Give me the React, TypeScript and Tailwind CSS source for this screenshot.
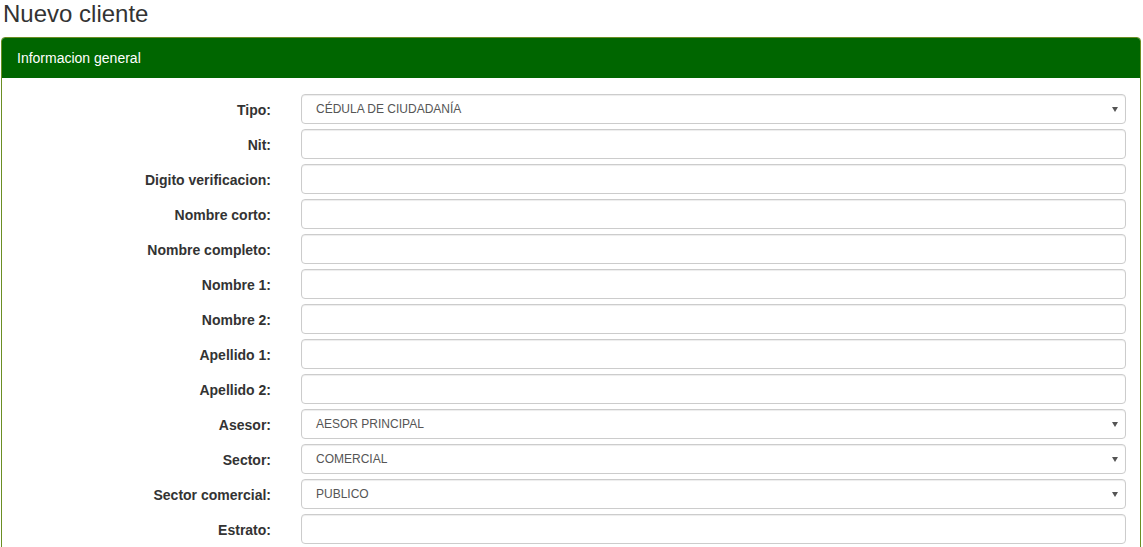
import React from 'react';

type Field = {
  label: string;
  value?: string;
  select?: boolean;
};

const fields: Field[] = [
  { label: 'Tipo:', value: 'CÉDULA DE CIUDADANÍA', select: true },
  { label: 'Nit:' },
  { label: 'Digito verificacion:' },
  { label: 'Nombre corto:' },
  { label: 'Nombre completo:' },
  { label: 'Nombre 1:' },
  { label: 'Nombre 2:' },
  { label: 'Apellido 1:' },
  { label: 'Apellido 2:' },
  { label: 'Asesor:', value: 'AESOR PRINCIPAL', select: true },
  { label: 'Sector:', value: 'COMERCIAL', select: true },
  { label: 'Sector comercial:', value: 'PUBLICO', select: true },
  { label: 'Estrato:' },
];

function FormRow({ field }: { field: Field }) {
  return (
    <div className="flex items-center">
      <label className="w-[299px] shrink-0 pr-[30px] pt-[2px] text-right text-[14px] font-bold text-[#333]">
        {field.label}
      </label>
      <div className="relative flex h-[30px] flex-1 items-center rounded-[4px] border border-[#ccc] bg-white px-[14px] shadow-[inset_0_1px_1px_rgba(0,0,0,0.075)]">
        {field.value && <span className="text-[12px] text-[#555]">{field.value}</span>}
        {field.select && (
          <svg className="absolute right-[7px] top-[12px]" width="6" height="5" viewBox="0 0 6 5">
            <path d="M0 0 H6 L3 5 Z" fill="#555" />
          </svg>
        )}
      </div>
    </div>
  );
}

export default function App() {
  return (
    <div className="min-h-screen bg-white font-['Liberation_Sans',Arial,sans-serif] text-[#333]">
      <h3 className="pl-[3px] text-[24px] leading-[28px]">Nuevo cliente</h3>

      <div className="ml-px mr-[2px] mt-[9px] rounded-t-[4px] border border-[#6b8e23]">
        {/* Header */}
        <div className="flex h-[40px] items-center rounded-t-[3px] bg-[#006600] px-[15px] text-[14px] text-white">
          Informacion general
        </div>

        {/* Body */}
        <div className="flex flex-col gap-[5px] pb-[15px] pr-[14px] pt-[16px]">
          {fields.map((f) => (
            <FormRow key={f.label} field={f} />
          ))}
        </div>
      </div>
    </div>
  );
}
